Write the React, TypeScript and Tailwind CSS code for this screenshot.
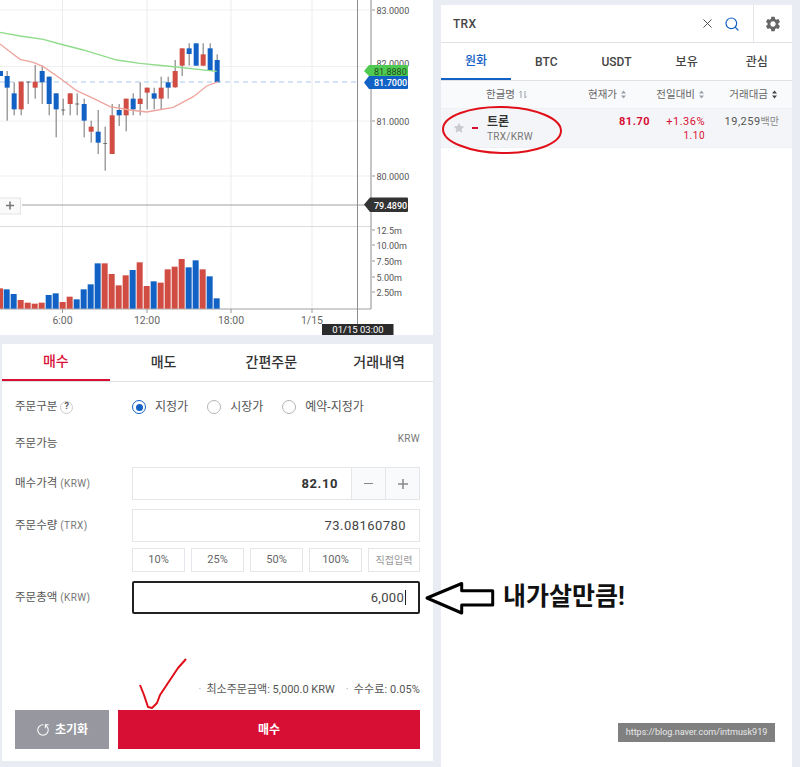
import { Search, X, RotateCw, Star } from 'lucide-react';
import { MdSettings } from 'react-icons/md';

const KR = "font-['Roboto','Noto_Sans_CJK_KR',sans-serif]";
const RED = '#d14d43';
const BLUE = '#1261c4';

// x, wick top, wick bottom, body top, body bottom (stored at 3x, divided when drawn)
const candles: [number, number, number, number, number, 'r' | 'b' | 'd'][] = [
  [0, 213, 228, 213, 228, 'b'],
  [20, 213, 362, 228, 263, 'b'],
  [41, 247, 346, 280, 328, 'b'],
  [62, 245, 346, 245, 328, 'r'],
  [83, 245, 312, 245, 247, 'd'],
  [104, 195, 296, 245, 263, 'r'],
  [125, 197, 312, 213, 247, 'b'],
  [146, 230, 346, 230, 312, 'b'],
  [167, 280, 412, 280, 328, 'b'],
  [188, 296, 346, 329, 331, 'd'],
  [209, 280, 346, 280, 312, 'r'],
  [230, 280, 346, 311, 313, 'd'],
  [251, 296, 412, 312, 362, 'b'],
  [272, 362, 428, 380, 395, 'r'],
  [293, 330, 462, 395, 428, 'b'],
  [314, 380, 512, 429, 431, 'd'],
  [335, 312, 462, 346, 462, 'r'],
  [356, 312, 378, 330, 346, 'b'],
  [377, 296, 394, 296, 346, 'r'],
  [398, 280, 346, 296, 328, 'b'],
  [419, 247, 346, 296, 312, 'r'],
  [440, 263, 328, 263, 278, 'r'],
  [461, 263, 328, 280, 296, 'b'],
  [482, 230, 328, 263, 296, 'r'],
  [503, 230, 296, 247, 263, 'b'],
  [524, 180, 263, 213, 262, 'r'],
  [545, 145, 228, 145, 197, 'r'],
  [566, 130, 197, 145, 162, 'b'],
  [587, 130, 197, 130, 197, 'b'],
  [608, 130, 197, 163, 197, 'r'],
  [629, 130, 213, 145, 213, 'b'],
  [650, 163, 247, 180, 247, 'b'],
];

// bar tops in the volume pane, 3x units measured from y = 180
const volumes: [number, number, 'r' | 'b'][] = [
  [0, 325, 'r'], [20, 328, 'b'], [41, 342, 'b'], [62, 360, 'r'], [83, 368, 'r'], [104, 371, 'r'],
  [125, 368, 'r'], [146, 345, 'b'], [167, 340, 'b'], [188, 366, 'r'], [209, 350, 'r'], [230, 358, 'b'],
  [251, 328, 'b'], [272, 313, 'b'], [293, 250, 'b'], [314, 250, 'r'], [335, 282, 'r'], [356, 316, 'r'],
  [377, 286, 'r'], [398, 270, 'b'], [419, 247, 'r'], [440, 318, 'r'], [461, 304, 'b'], [482, 308, 'r'],
  [503, 268, 'r'], [524, 260, 'r'], [545, 237, 'r'], [566, 262, 'b'], [587, 241, 'b'], [608, 268, 'r'],
  [629, 289, 'b'], [650, 355, 'b'],
];

const greenLine = [[0, 97], [60, 108], [130, 118], [180, 132], [250, 150], [350, 180], [420, 190], [500, 198], [650, 214]];
const redLine = [[0, 132], [30, 155], [60, 178], [100, 187], [130, 200], [180, 235], [230, 272], [280, 295], [330, 320], [390, 330], [440, 336], [520, 322], [580, 290], [620, 258], [655, 245]];

const toPoints = (pts: number[][]) => pts.map(([x, y]) => `${x / 3},${y / 3}`).join(' ');

const priceLabels = [
  { y: 10, t: '83.0000' },
  { y: 121, t: '81.0000' },
  { y: 176, t: '80.0000' },
];
const volumeLabels = [
  { y: 230, t: '12.5m' },
  { y: 245, t: '10.00m' },
  { y: 261, t: '7.50m' },
  { y: 277, t: '5.00m' },
  { y: 292, t: '2.50m' },
];
const timeLabels = [
  { x: 62.5, t: '6:00' },
  { x: 147, t: '12:00' },
  { x: 231, t: '18:00' },
  { x: 312, t: '1/15' },
];

function Chart() {
  return (
    <svg width="433" height="335" viewBox="0 0 433 335" className="block" fontFamily="Roboto, sans-serif" fontSize="9">
      {[10, 66.5, 121, 176].map((y) => (
        <line key={y} x1="0" x2="371" y1={y} y2={y} stroke="#f0f0f0" />
      ))}
      {timeLabels.map((l) => (
        <line key={l.x} x1={l.x} x2={l.x} y1="0" y2="309" stroke="#ececec" />
      ))}
      <line x1="0" x2="371" y1="226.5" y2="226.5" stroke="#dcdcdc" />
      <line x1="0" x2="358" y1="82" y2="82" stroke="#a9c8ef" strokeDasharray="5 4" />
      <line x1="22" x2="371" y1="205" y2="205" stroke="#a0a0a0" />
      <line x1="0" x2="371" y1="309" y2="309" stroke="#a0a0a0" />
      <line x1="371" x2="371" y1="0" y2="309" stroke="#8c8c8c" />
      <line x1="357.5" x2="357.5" y1="0" y2="324" stroke="#8c8c8c" />

      {candles.map(([x, wt, wb, bt, bb, c]) => (
        <g key={x}>
          <line x1={x / 3 + 0.5} x2={x / 3 + 0.5} y1={wt / 3} y2={wb / 3} stroke="#6f6f6f" />
          <rect
            x={c === 'd' ? x / 3 - 1.5 : x / 3 - 2}
            y={bt / 3}
            width={c === 'd' ? 4 : 5}
            height={(bb - bt) / 3}
            fill={c === 'r' ? RED : c === 'b' ? BLUE : '#444'}
          />
        </g>
      ))}
      <polyline points={toPoints(greenLine)} fill="none" stroke="#8fdc8a" strokeWidth="1.3" />
      <polyline points={toPoints(redLine)} fill="none" stroke="#eea49c" strokeWidth="1.3" />

      {volumes.map(([x, top, c]) => (
        <rect key={x} x={x / 3 - 3} y={180 + top / 3} width="6" height={(386 - top) / 3} fill={c === 'r' ? RED : BLUE} />
      ))}

      {/* axis labels */}
      {[...priceLabels, ...volumeLabels].map((l) => (
        <g key={l.t}>
          <line x1="372" x2="375" y1={l.y} y2={l.y} stroke="#999" />
          <text x="376.5" y={l.y + 3.5} fill="#555">{l.t}</text>
        </g>
      ))}
      <text x="376.5" y="67" fill="#555">82.0000</text>
      {timeLabels.map((l) => (
        <g key={l.t}>
          <line x1={l.x} x2={l.x} y1="309" y2="313" stroke="#999" />
          <text x={l.x} y="324" textAnchor="middle" fill="#666" fontSize="10.5">{l.t}</text>
        </g>
      ))}

      {/* price tags */}
      <path d="M364 71 L369 65 H407 Q408 65 408 66 V76 H369 Z" fill="#4fc951" />
      <text x="374" y="75" fill="#1d4d1e">81.8880</text>
      <path d="M364 82.5 L369 76 H408 V88 Q408 89 407 89 H369 Z" fill={BLUE} />
      <text x="374" y="86" fill="#fff" fontWeight="500">81.7000</text>
      <path d="M364 204.5 L370 197.5 H407 Q408 197.5 408 198.5 V211 Q408 212 407 212 H370 Z" fill="#333" />
      <text x="374" y="208.5" fill="#fff" fontWeight="500">79.4890</text>

      {/* crosshair date */}
      <rect x="322" y="324" width="71.5" height="11" fill="#2b2b2b" />
      <text x="358" y="333" textAnchor="middle" fill="#fff" fontSize="9.5">01/15 03:00</text>

      {/* add-indicator button */}
      <rect x="-1" y="198" width="21.5" height="16" fill="#fafafa" stroke="#e4e4e4" />
      <path d="M6 205.5 H14 M10 201.5 V209.5" stroke="#777" strokeWidth="1.6" />
    </svg>
  );
}

function Radio({ label, checked }: { label: string; checked?: boolean }) {
  return (
    <div className="flex items-center gap-[9px]">
      <span className={`flex h-[14px] w-[14px] items-center justify-center rounded-full border-[1.5px] bg-white ${checked ? 'border-[#1261c4]' : 'border-[#b5b5b5]'}`}>
        {checked && <span className="h-[7px] w-[7px] rounded-full bg-[#1261c4]" />}
      </span>
      <span className="text-[12px] text-[#555]">{label}</span>
    </div>
  );
}

function FieldLabel({ label, unit }: { label: string; unit: string }) {
  return (
    <div className="w-[117px] text-[11.5px] text-[#555]">
      {label} <span className="text-[10px] tracking-[0.4px] text-[#777]">({unit})</span>
    </div>
  );
}

function OrderForm() {
  const tabs = ['매수', '매도', '간편주문', '거래내역'];
  return (
    <div className="ml-[2px] mt-[9px] h-[417px] w-[431px] bg-white">
      <div className="grid h-[38px] grid-cols-4 border-b border-[#dfe1e6]">
        {tabs.map((t, i) => (
          <div
            key={t}
            className={`flex items-center justify-center text-[14px] font-medium ${i === 0 ? 'border-b-2 border-[#d80f34] text-[#d80f34]' : 'text-[#333]'}`}
          >
            {t}
          </div>
        ))}
      </div>

      <div className="px-[13px]">
        <div className="mt-[15px] flex h-[20px] items-center">
          <div className="flex w-[117px] items-center gap-[3px] text-[11.5px] text-[#555]">
            주문구분
            <span className="flex h-[13px] w-[13px] items-center justify-center rounded-full border border-[#ccc] text-[9px] font-bold">?</span>
          </div>
          <div className="flex items-center gap-[19px]">
            <Radio label="지정가" checked />
            <Radio label="시장가" />
            <Radio label="예약-지정가" />
          </div>
        </div>

        <div className="mt-[16px] flex h-[20px] justify-between">
          <span className="text-[11.5px] leading-[20px] text-[#555]">주문가능</span>
          <span className="text-[10px] leading-[12px] tracking-[0.3px] text-[#777]">KRW</span>
        </div>

        <div className="mt-[14px] flex h-[33px] items-center">
          <FieldLabel label="매수가격" unit="KRW" />
          <div className="flex h-full flex-1 border border-[#e4e6ea]">
            <div className="flex-1 pr-[13px] text-right text-[13px] font-bold leading-[31px] tracking-[0.6px] text-[#333]">82.10</div>
            <div className="flex w-[34px] items-center justify-center border-l border-[#e4e6ea] bg-[#f9fafb] text-[#777]">
              <span className="h-[1.5px] w-[9px] bg-[#888]" />
            </div>
            <div className="flex w-[34px] items-center justify-center border-l border-[#e4e6ea] bg-[#f9fafb]">
              <svg width="10" height="10" viewBox="0 0 10 10"><path d="M0 5 H10 M5 0 V10" stroke="#888" strokeWidth="1.5" /></svg>
            </div>
          </div>
        </div>

        <div className="mt-[9px] flex h-[33px] items-center">
          <FieldLabel label="주문수량" unit="TRX" />
          <div className="h-full flex-1 border border-[#e4e6ea] pr-[13px] text-right text-[13px] leading-[31px] tracking-[0.45px] text-[#444]">73.08160780</div>
        </div>

        <div className="ml-[117px] mt-[6px] flex h-[24px] gap-[6px]">
          {['10%', '25%', '50%', '100%'].map((p) => (
            <div key={p} className="flex w-[53px] items-center justify-center border border-[#e4e6ea] text-[11px] text-[#666]">{p}</div>
          ))}
          <div className="flex flex-1 items-center justify-center border border-[#e4e6ea] text-[10px] text-[#999]">직접입력</div>
        </div>

        <div className="mt-[9px] flex h-[33px] items-center">
          <FieldLabel label="주문총액" unit="KRW" />
          <div className="flex h-full flex-1 items-center justify-end rounded-[2px] border-2 border-[#222] pr-[12px] text-[13px] tracking-[0.3px] text-[#444]">
            6,000<span className="ml-[1px] h-[15px] w-px bg-[#222]" />
          </div>
        </div>

        <div className="mt-[69px] flex h-[14px] items-center justify-end gap-[11px] text-[11px] text-[#555]">
          <span><span className="mr-[5px] text-[#aaa]">·</span>최소주문금액: 5,000.0 KRW</span>
          <span className="tracking-[0.1px]"><span className="mr-[5px] text-[#aaa]">·</span>수수료: 0.05%</span>
        </div>

        <div className="mt-[13px] flex h-[39px] gap-[9px]">
          <div className="flex w-[94px] items-center justify-center gap-[5px] bg-[#96979f] text-[12px] font-bold text-white">
            <RotateCw size={14} strokeWidth={1.8} className="-scale-x-100 rotate-90" />
            초기화
          </div>
          <div className="flex flex-1 items-center justify-center bg-[#d80f34] text-[12px] font-bold text-white">매수</div>
        </div>
      </div>
    </div>
  );
}

function SortArrows({ dark }: { dark?: boolean }) {
  return (
    <svg width="7" height="9" viewBox="0 0 7 9" className="ml-[3px] shrink-0">
      <path d="M3.5 0.5 L6 3.5 H1 Z" fill={dark ? '#444' : '#9a9fab'} />
      <path d="M3.5 8.5 L6 5.5 H1 Z" fill={dark ? '#444' : '#9a9fab'} />
    </svg>
  );
}

function MarketList() {
  const tabs = ['원화', 'BTC', 'USDT', '보유', '관심'];
  return (
    <div className="ml-[8px] mt-[5px] h-[762px] w-[351px] bg-white">
      <div className="flex h-[38px] items-center border-b border-[#dfe1e6]">
        <div className="flex h-full flex-1 items-center pl-[12px] pr-[13px] text-[12px] font-medium text-[#444]">
          <span className="flex-1 tracking-[0.3px]">TRX</span>
          <X size={15} strokeWidth={1.5} className="mr-[9px] text-[#444]" />
          <Search size={16} strokeWidth={1.8} className="text-[#1261c4]" />
        </div>
        <div className="flex h-full w-[39px] items-center justify-center border-l border-[#e4e6ea]">
          <MdSettings size={18} className="text-[#666]" />
        </div>
      </div>

      <div className="flex h-[38px] border-b border-[#dfe1e6]">
        {tabs.map((t, i) => (
          <div
            key={t}
            className={`flex w-[70.2px] items-center justify-center text-[12px] font-medium ${i === 0 ? 'border-b-2 border-[#1261c4] font-bold text-[#1261c4]' : 'text-[#444]'}`}
          >
            {t}
          </div>
        ))}
      </div>

      <div className="grid h-[27px] grid-cols-[130px_56px_78px_73px] items-center bg-[#f9fafc] text-[10.5px] text-[#666]">
        <div className="flex items-center pl-[45px]">
          한글명
          <svg width="8" height="9" viewBox="0 0 8 9" className="ml-[4px]">
            <path d="M2 8 V1 L0.5 2.5 M6 1 V8 L7.5 6.5" stroke="#9a9fab" fill="none" strokeWidth="1" />
          </svg>
        </div>
        <div className="flex items-center justify-end">현재가<SortArrows /></div>
        <div className="flex items-center justify-end">전일대비<SortArrows /></div>
        <div className="flex items-center justify-end">거래대금<SortArrows dark /></div>
      </div>

      <div className="grid h-[40px] grid-cols-[130px_79px_55px_74px] border-y border-[#eef0f3] bg-[#f4f5f8] pt-[5px]">
        <div className="flex">
          <Star size={12} fill="#c9cbd1" strokeWidth={0} className="ml-[12px] mt-[8px]" />
          <span className="ml-[7px] mt-[13px] h-[1.5px] w-[6px] bg-[#d80f34]" />
          <div className="ml-[9px]">
            <div className="text-[12px] font-bold leading-[16px] text-[#333]">트론</div>
            <div className="text-[10px] leading-[13px] tracking-[0.3px] text-[#777]">TRX/KRW</div>
          </div>
        </div>
        <div className="text-right text-[11px] font-bold leading-[16px] tracking-[0.5px] text-[#d80f34]">81.70</div>
        <div className="text-right text-[11px] leading-[16px] tracking-[0.5px] text-[#d80f34]">
          +1.36%
          <div className="text-[10px] leading-[12px]">1.10</div>
        </div>
        <div className="text-right text-[11px] leading-[16px] tracking-[0.5px] text-[#555]">
          19,259<span className="text-[10px] tracking-normal text-[#888]">백만</span>
        </div>
      </div>
    </div>
  );
}

export default function App() {
  return (
    <div className={`relative flex h-[767px] w-[800px] overflow-hidden bg-[#e9ecf2] ${KR}`}>
      <div className="w-[433px] shrink-0">
        <div className="h-[335px] bg-white">
          <Chart />
        </div>
        <OrderForm />
      </div>
      <MarketList />

      {/* hand-drawn notes on top of the page */}
      <svg width="800" height="767" viewBox="0 0 800 767" className="pointer-events-none absolute left-0 top-0" fill="none">
        <ellipse cx="502" cy="130" rx="59" ry="23" stroke="#e0101a" strokeWidth="2" transform="rotate(1 502 130)" />
        <polyline points="140,685 144,695 148,707 152,708 157,703 160,695 170,680 178,668 186,659" stroke="#e0101a" strokeWidth="2" strokeLinejoin="round" />
        <path d="M427 598 L461.7 583.5 V590.7 H492.7 V605 H461.7 V613 Z" fill="#fff" stroke="#000" strokeWidth="3" strokeLinejoin="round" />
      </svg>
      <div className="absolute left-[503px] top-[579px] text-[25px] font-bold leading-[36px] text-[#111]">내가살만큼!</div>
      <div className="absolute left-[618px] top-[723px] flex h-[19px] w-[157px] items-center justify-center bg-[#808080] text-[9px] text-[#e8e8e8]">
        https://blog.naver.com/intmusk919
      </div>
    </div>
  );
}
